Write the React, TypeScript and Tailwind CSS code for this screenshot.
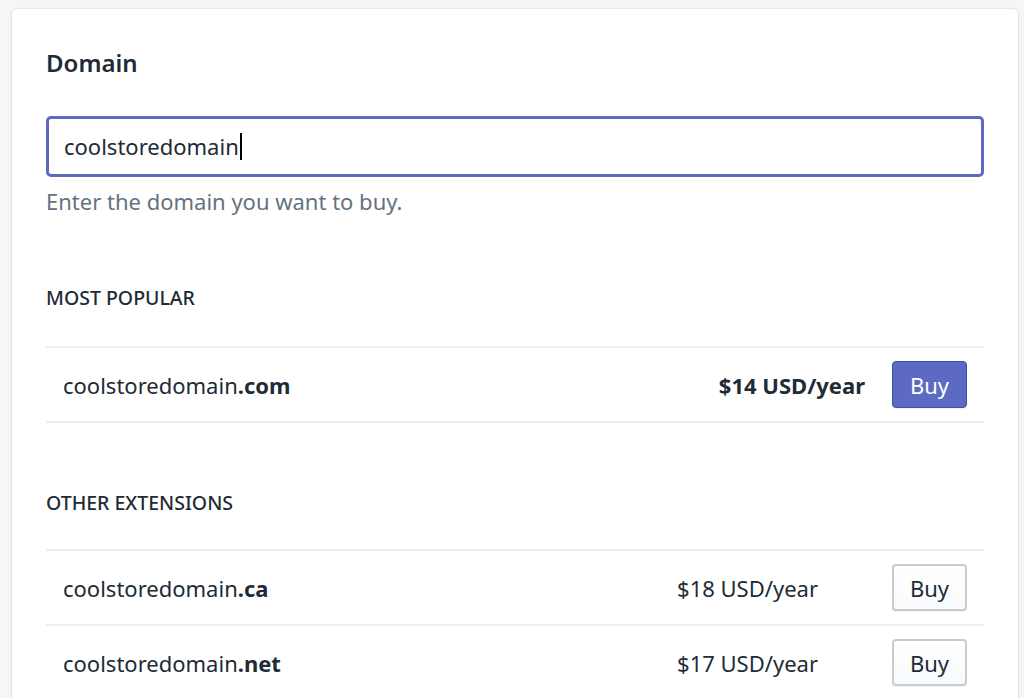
const domain = 'coolstoredomain';

const popular = [{ ext: 'com', price: '$14 USD/year' }];
const others = [
  { ext: 'ca', price: '$18 USD/year' },
  { ext: 'net', price: '$17 USD/year' },
];

function DomainRow({ name, ext, price, primary }: { name: string; ext: string; price: string; primary?: boolean }) {
  return (
    <div className="flex items-center justify-between h-[75px] pl-[17px] pr-[17px] border-t-2 border-[#eceef1]">
      <span className="text-[22px] text-[#212b36] leading-[30px]">
        {name}
        <span className="font-bold">.{ext}</span>
      </span>
      <div className="flex items-center">
        <span className={`text-[22px] text-[#212b36] leading-[30px] ${primary ? 'font-bold' : ''}`}>{price}</span>
        <button
          className={`w-[75px] h-[47px] rounded-[4px] text-[22px] leading-none ${
            primary
              ? 'ml-[27px] bg-[#5c6ac4] text-white border border-[#3f4eae] shadow-[0_1px_0_rgba(22,29,37,0.05)]'
              : 'ml-[74px] bg-gradient-to-b from-white to-[#f9fafb] text-[#212b36] border-2 border-[#c4cdd5] shadow-[0_1px_0_rgba(22,29,37,0.05)]'
          }`}
        >
          Buy
        </button>
      </div>
    </div>
  );
}

export default function App() {
  return (
    <div className="h-[698px] overflow-hidden bg-[#f4f6f8] pt-[9px] pl-[12px] pr-[6px] font-['Noto_Sans','Open_Sans',sans-serif]">
      <div className="bg-white rounded-[5px] shadow-[0_0_0_1px_rgba(63,63,68,0.05),0_1px_3px_0_rgba(63,63,68,0.15)] px-[34px] pt-[38px] pb-[40px]">
        <h2 className="text-[24px] font-semibold text-[#212b36] leading-[32px]">Domain</h2>

        <div className="mt-[37px]">
          {/* focused text field with caret */}
          <div className="flex items-center w-full h-[61px] px-[15px] border-[3px] border-[#5c6ac4] rounded-[5px] text-[22px] text-[#212b36]">
            <span>{domain}</span>
            <span className="inline-block w-[2px] h-[27px] bg-black ml-[1px]" />
          </div>
          <p className="mt-[9px] text-[22px] text-[#637381] leading-[30px]">Enter the domain you want to buy.</p>
        </div>

        <h3 className="mt-[70px] text-[19.5px] font-medium uppercase text-[#212b36] leading-[24px]">Most popular</h3>
        <div className="mt-[36px] border-b-2 border-[#eceef1]">
          {popular.map(d => (
            <DomainRow key={d.ext} name={domain} ext={d.ext} price={d.price} primary />
          ))}
        </div>

        <h3 className="mt-[68px] text-[19.5px] font-medium uppercase text-[#212b36] leading-[24px]">Other extensions</h3>
        <div className="mt-[34px] border-b-2 border-[#eceef1]">
          {others.map(d => (
            <DomainRow key={d.ext} name={domain} ext={d.ext} price={d.price} />
          ))}
        </div>
      </div>
    </div>
  );
}
